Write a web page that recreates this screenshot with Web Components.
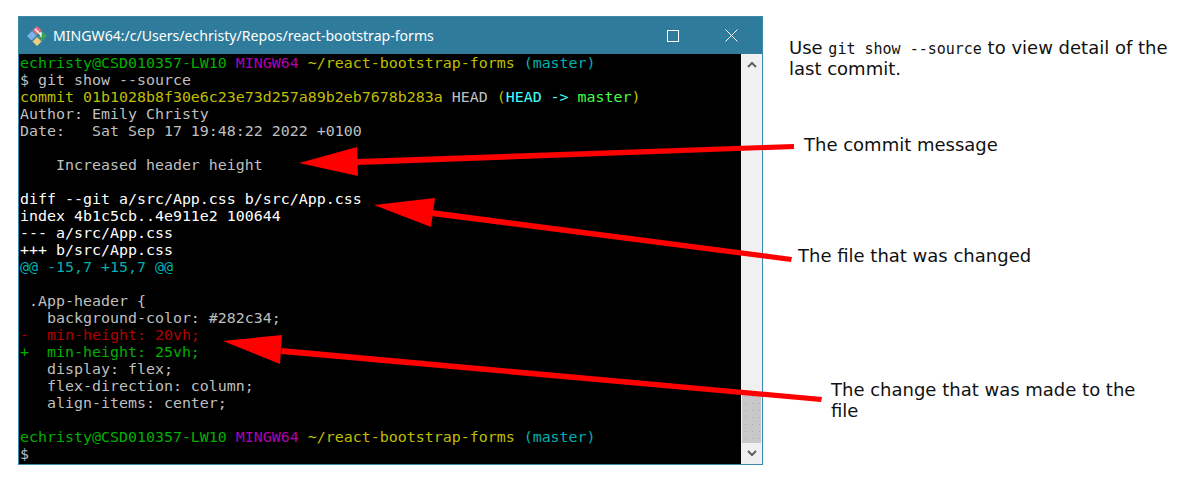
<!DOCTYPE html>
<html>
<head>
<meta charset="utf-8">
<title>git show</title>
<style>
  html, body { margin: 0; padding: 0; background: #fff; }
  body { width: 1200px; height: 500px; overflow: hidden; }
</style>
</head>
<body>
<annotated-shot>
  <terminal-window slot="window" title="MINGW64:/c/Users/echristy/Repos/react-bootstrap-forms"></terminal-window>
  <side-note slot="note">Use <code>git show --source</code> to view detail of the last commit.</side-note>
  <call-out slot="callout" x="804" y="134">The commit message</call-out>
  <call-out slot="callout" x="798" y="245">The file that was changed</call-out>
  <call-out slot="callout" x="831" y="379" width="315">The change that was made to the file</call-out>
</annotated-shot>

<script>
class AnnotatedShot extends HTMLElement {
  constructor() {
    super();
    this.attachShadow({ mode: "open" });
    this.shadowRoot.innerHTML = `
      <style>
        :host { display: block; position: relative; width: 1200px; height: 500px; }
        .row { display: flex; align-items: flex-start; padding: 16px 0 0 18px; gap: 26px; }
        svg { position: absolute; left: 0; top: 0; pointer-events: none; }
      </style>
      <div class="row">
        <slot name="window"></slot>
        <slot name="note"></slot>
      </div>
      <svg width="1200" height="500" viewBox="0 0 1200 500">
        <g fill="#fe0000">
          <polygon points="794,144 357,159 357,165 794,149"/>
          <polygon points="299,163 357,147 358,176"/>
          <polygon points="792,257 432,210 431,216 791,262"/>
          <polygon points="374,205 435,198 431,227"/>
          <polygon points="822,397 282,348 281,354 821,402"/>
          <polygon points="223,341 282,335 280,364"/>
        </g>
      </svg>
      <slot name="callout"></slot>
    `;
  }
}

class TerminalWindow extends HTMLElement {
  constructor() {
    super();
    this.attachShadow({ mode: "open" });
    this.shadowRoot.innerHTML = `
      <style>
        :host { display: block; width: 745px; height: 449px; box-sizing: border-box; border: 1px solid #3a8bac; background: #2f7b9b; }
        .titlebar { display: flex; align-items: center; height: 37px; color: #fff; font: 14.1px "Noto Sans", sans-serif; }
        .logo { width: 22px; height: 22px; margin: 0 5px 0 7px; flex: none; }
        .caption { flex: 1; white-space: nowrap; }
        .btn { width: 58px; height: 37px; display: flex; align-items: center; justify-content: center; }
        .btn:last-child { margin-right: 2px; }
        .body { display: flex; height: 410px; }
        term-output { flex: 1; }
      </style>
      <div class="titlebar">
        <svg class="logo" viewBox="0 0 22 22">
          <path d="M6 6.5 L10 10.5 L5.5 15 L1.5 11Z" fill="#7cb5ec" stroke="#7cb5ec" stroke-linejoin="round"/>
          <path d="M11 1.5 L15 5.5 L11 9.5 L7 5.5Z" fill="#e8707f" stroke="#e8707f" stroke-linejoin="round"/>
          <path d="M16 6.5 L20.5 11 L16 15.5 L12 11.5Z" fill="#3f9f5f" stroke="#3f9f5f" stroke-linejoin="round"/>
          <path d="M11 12.5 L15 16.5 L11 20.5 L7 16.5Z" fill="#f0cf80" stroke="#f0cf80" stroke-linejoin="round"/>
          <path d="M9 4 L15 10 M15 7 V12" stroke="#fff" stroke-width="1.2" fill="none"/>
        </svg>
        <span class="caption">${this.getAttribute("title")}</span>
        <span class="btn"></span>
        <span class="btn"><svg width="12" height="12"><rect x=".5" y=".5" width="11" height="11" fill="none" stroke="#fff"/></svg></span>
        <span class="btn"><svg width="13" height="13"><path d="M.5 .5 12.5 12.5 M12.5 .5 .5 12.5" stroke="#fff" fill="none"/></svg></span>
      </div>
      <div class="body">
        <term-output></term-output>
        <term-scrollbar></term-scrollbar>
      </div>
    `;
  }
}

class TermOutput extends HTMLElement {
  constructor() {
    super();
    this.attachShadow({ mode: "open" });
    const prompt = `<span class="g">echristy@CSD010357-LW10</span> <span class="m">MINGW64</span> <span class="y">~/react-bootstrap-forms</span> <span class="c">(master)</span>`;
    const lines = [
      prompt,
      `$ git show --source`,
      `<span class="y">commit 01b1028b8f30e6c23e73d257a89b2eb7678b283a</span> HEAD <span class="y">(</span><span class="cb">HEAD -&gt; </span><span class="gb">master</span><span class="y">)</span>`,
      `Author: Emily Christy`,
      `Date:   Sat Sep 17 19:48:22 2022 +0100`,
      ``,
      `    Increased header height`,
      ``,
      `<span class="w">diff --git a/src/App.css b/src/App.css</span>`,
      `<span class="w">index 4b1c5cb..4e911e2 100644</span>`,
      `<span class="w">--- a/src/App.css</span>`,
      `<span class="w">+++ b/src/App.css</span>`,
      `<span class="c">@@ -15,7 +15,7 @@</span>`,
      ``,
      ` .App-header {`,
      `   background-color: #282c34;`,
      `<span class="r">-  min-height: 20vh;</span>`,
      `<span class="g">+  min-height: 25vh;</span>`,
      `   display: flex;`,
      `   flex-direction: column;`,
      `   align-items: center;`,
      ``,
      prompt,
      `$`,
    ];
    this.shadowRoot.innerHTML = `
      <style>
        :host { display: block; background: #000; color: #bfbfbf; font: 14.95px/17px "DejaVu Sans Mono", monospace; padding: 1px 0 0 1px; overflow: hidden; }
        div { height: 17px; white-space: pre; }
        .g { color: #00b000; }
        .m { color: #b000b0; }
        .y { color: #bfbf00; }
        .c { color: #00b0b0; }
        .cb { color: #40ffff; }
        .gb { color: #40ff40; }
        .w { color: #fff; }
        .r { color: #b00000; }
      </style>
      ${lines.map(l => `<div>${l}</div>`).join("")}
    `;
  }
}

class TermScrollbar extends HTMLElement {
  constructor() {
    super();
    this.attachShadow({ mode: "open" });
    this.shadowRoot.innerHTML = `
      <style>
        :host { display: flex; flex-direction: column; width: 21px; background: #f0f0f0; flex: none; }
        .arrow { height: 21px; display: flex; align-items: center; justify-content: center; flex: none; }
        .track { flex: 1; display: flex; flex-direction: column; justify-content: flex-end; }
        .thumb {
          height: 50px; margin: 0 1px; background-color: #c8c8c8;
          background-image: radial-gradient(circle, #a8a8a8 .6px, transparent .8px);
          background-size: 7px 7px;
        }
      </style>
      <div class="arrow"><svg width="10" height="7"><path d="M1 6 5 2 9 6" stroke="#606060" stroke-width="2" fill="none"/></svg></div>
      <div class="track"><div class="thumb"></div></div>
      <div class="arrow"><svg width="10" height="7"><path d="M1 1 5 5 9 1" stroke="#606060" stroke-width="2" fill="none"/></svg></div>
    `;
  }
}

class SideNote extends HTMLElement {
  constructor() {
    super();
    this.attachShadow({ mode: "open" });
    this.shadowRoot.innerHTML = `
      <style>
        :host { display: block; width: 385px; margin-top: 21px; font: 18px/21px "DejaVu Sans", sans-serif; color: #111; }
        ::slotted(code) { font: 15px/1 "DejaVu Sans Mono", monospace; }
      </style>
      <slot></slot>
    `;
  }
}

class CallOut extends HTMLElement {
  constructor() {
    super();
    this.attachShadow({ mode: "open" });
    this.shadowRoot.innerHTML = `
      <style>
        :host { display: block; position: absolute; font: 18px/21px "DejaVu Sans", sans-serif; color: #111; }
      </style>
      <slot></slot>
    `;
  }
  connectedCallback() {
    this.style.left = this.getAttribute("x") + "px";
    this.style.top = this.getAttribute("y") + "px";
    if (this.hasAttribute("width")) this.style.width = this.getAttribute("width") + "px";
  }
}

customElements.define("annotated-shot", AnnotatedShot);
customElements.define("terminal-window", TerminalWindow);
customElements.define("term-output", TermOutput);
customElements.define("term-scrollbar", TermScrollbar);
customElements.define("side-note", SideNote);
customElements.define("call-out", CallOut);
</script>
</body>
</html>
